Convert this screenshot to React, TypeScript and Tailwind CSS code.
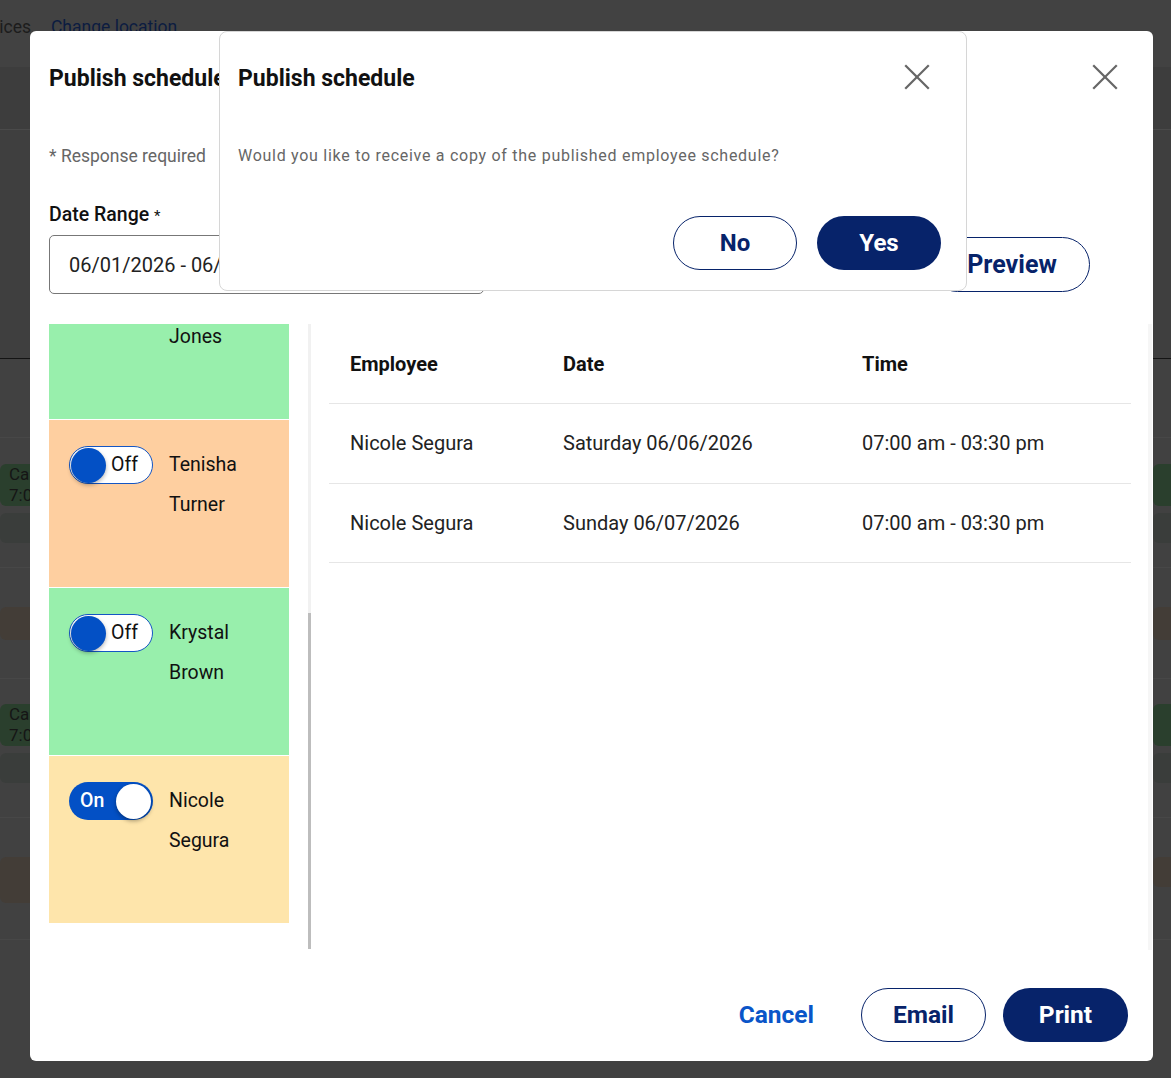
import React from 'react';

function CloseIcon() {
  return (
    <svg width="26" height="26" viewBox="0 0 26 26" fill="none" stroke="#666666" strokeWidth="2.2" strokeLinecap="square">
      <line x1="2" y1="2" x2="24" y2="24" />
      <line x1="24" y1="2" x2="2" y2="24" />
    </svg>
  );
}

function Toggle({ on }: { on: boolean }) {
  if (on) {
    return (
      <div className="flex h-[38px] w-[84px] shrink-0 items-center justify-between rounded-full bg-[#0350c5] pl-[11px] pr-[2px]">
        <span className="text-[19.5px] font-medium text-white">On</span>
        <span className="h-[35px] w-[35px] rounded-full bg-white shadow-[0_2px_4px_rgba(0,0,0,0.35)]" />
      </div>
    );
  }
  return (
    <div className="flex h-[38px] w-[84px] shrink-0 items-center rounded-full border-[1.5px] border-[#1456c4] bg-white pl-[1px]">
      <span className="h-[35px] w-[35px] rounded-full bg-[#0350c5] shadow-[0_2px_4px_rgba(0,0,0,0.3)]" />
      <span className="ml-[5px] text-[19.5px] text-[#111]">Off</span>
    </div>
  );
}

interface Person {
  first: string;
  last: string;
  on: boolean;
  color: string;
}

const people: Person[] = [
  { first: 'Marcus', last: 'Jones', on: false, color: 'bg-[#98efac]' },
  { first: 'Tenisha', last: 'Turner', on: false, color: 'bg-[#fecfa0]' },
  { first: 'Krystal', last: 'Brown', on: false, color: 'bg-[#98efac]' },
  { first: 'Nicole', last: 'Segura', on: true, color: 'bg-[#fee5ab]' },
];

const shifts = [
  { name: 'Nicole Segura', date: 'Saturday 06/06/2026', time: '07:00 am - 03:30 pm' },
  { name: 'Nicole Segura', date: 'Sunday 06/07/2026', time: '07:00 am - 03:30 pm' },
];

function BgCells({ label }: { label: boolean }) {
  return (
    <div className="flex flex-col gap-[7px]">
      <div className="flex h-[42px] w-[70px] flex-col justify-center rounded-[6px] bg-[#2a3f2d] pl-[9px] text-[17px] leading-[21px] text-[#151515]">
        {label && (
          <>
            <span>Ca</span>
            <span>7:0</span>
          </>
        )}
      </div>
      <div className="h-[30px] w-[70px] rounded-[6px] bg-[#3a3d3b]" />
    </div>
  );
}

function BackgroundPage() {
  return (
    <div className="flex flex-col bg-[#414141]">
      <div className="flex h-[67px] items-start gap-[20px] bg-[#424242] pt-[13px] text-[17.5px] leading-[28px]">
        <span className="-ml-[35px] text-[#1c1c1c]">Services</span>
        <span className="text-[#0c1c40]">Change location</span>
      </div>
      <div className="h-[63px] border-b border-[#4a4a4a] bg-[#3d3d3d]" />
      <div className="h-[229px] border-b border-[#141414] bg-[#3f3f3f]" />
      <div className="h-[79px] border-b border-[#474747]" />
      <div className="flex h-[130px] items-start justify-between border-b border-[#474747] pt-[26px]">
        <BgCells label />
        <div className="-mr-[52px]"><BgCells label={false} /></div>
      </div>
      <div className="flex h-[111px] items-start justify-between border-b border-[#474747] pt-[39px]">
        <div className="h-[33px] w-[70px] rounded-[6px] bg-[#433d37]" />
        <div className="-mr-[52px] h-[33px] w-[70px] rounded-[6px] bg-[#433d37]" />
      </div>
      <div className="flex h-[139px] items-start justify-between border-b border-[#474747] pt-[25px]">
        <BgCells label />
        <div className="-mr-[52px]"><BgCells label={false} /></div>
      </div>
      <div className="flex h-[122px] items-start justify-between border-b border-[#474747] pt-[39px]">
        <div className="h-[46px] w-[70px] rounded-[6px] bg-[#433d37]" />
        <div className="-mr-[52px] h-[30px] w-[70px] rounded-[6px] bg-[#433d37]" />
      </div>
      <div className="h-[138px]" />
    </div>
  );
}

export default function App() {
  return (
    <div className="relative h-[1078px] w-[1171px] overflow-hidden font-['Roboto',sans-serif]">
      <BackgroundPage />

      {/* main dialog */}
      <div className="absolute left-[30px] top-[31px] flex h-[1030px] w-[1123px] flex-col rounded-[6px] bg-white">
        <div className="flex items-start justify-between pl-[19px] pr-[35px] pt-[33px]">
          <h2 className="text-[23px] font-bold leading-[30px] text-[#111]">Publish schedule</h2>
          <div><CloseIcon /></div>
        </div>

        <p className="mt-[50px] pl-[19px] text-[17.5px] leading-[24px] text-[#666]">* Response required</p>

        <p className="mt-[35px] pl-[19px] text-[19.5px] font-medium leading-[24px] text-[#111]">
          Date Range <span className="text-[15px] font-normal">*</span>
        </p>

        <div className="mt-[7px] flex items-center justify-between pl-[19px] pr-[63px]">
          <div className="flex h-[59px] w-[435px] items-center rounded-[5px] border border-[#777] pl-[19px] text-[20px] text-[#222]">
            06/01/2026 - 06/07/2026
          </div>
          <button className="h-[55px] w-[160px] rounded-full border-[1.5px] border-[#07236a] pl-[4px] text-[25px] font-bold text-[#07236a]">
            Preview
          </button>
        </div>

        <div className="mt-[30px] flex h-[625px] pl-[19px] pr-[1px]">
          {/* employee list */}
          <div className="h-[625px] w-[240px] overflow-hidden">
            <div className="-mt-[72px] flex flex-col">
              {people.map((p) => (
                <div key={p.first} className={`flex h-[168px] shrink-0 gap-[16px] border-b border-white pl-[20px] pt-[25px] ${p.color}`}>
                  <div className="pt-[1px]"><Toggle on={p.on} /></div>
                  <div className="flex flex-col text-[19.5px] leading-[40px] text-[#111]">
                    <span>{p.first}</span>
                    <span>{p.last}</span>
                  </div>
                </div>
              ))}
            </div>
          </div>

          {/* left scrollbar */}
          <div className="ml-[19px] flex h-[625px] w-[3px] flex-col bg-[#f1f1f1]">
            <div className="mt-[289px] h-[336px] w-[3px] bg-[#bdbdbd]" />
          </div>

          {/* table */}
          <div className="ml-[18px] flex flex-1">
            <div className="w-[802px]">
              <div className="flex h-[80px] items-center border-b border-[#e6e6e6] text-[20px] font-bold text-[#111]">
                <div className="w-[234px] pl-[21px]">Employee</div>
                <div className="w-[299px]">Date</div>
                <div className="flex-1">Time</div>
              </div>
              {shifts.map((s) => (
                <div key={s.date} className="flex h-[79.5px] items-center border-b border-[#e6e6e6] text-[20px] text-[#222]">
                  <div className="w-[234px] pl-[21px]">{s.name}</div>
                  <div className="w-[299px]">{s.date}</div>
                  <div className="flex-1">{s.time}</div>
                </div>
              ))}
            </div>
            <div className="ml-[17px] h-[626px] w-[4px] bg-[#f6f6f6]" />
          </div>
        </div>

        <div className="mt-[39px] flex items-center justify-end pr-[25px]">
          <button className="mr-[47px] text-[24.5px] font-bold text-[#0a55c8]">Cancel</button>
          <button className="h-[54px] w-[125px] rounded-full border-[1.5px] border-[#07236a] text-[24.5px] font-bold text-[#07236a]">
            Email
          </button>
          <button className="ml-[17px] h-[54px] w-[125px] rounded-full bg-[#07236a] text-[24.5px] font-bold text-white">
            Print
          </button>
        </div>
      </div>

      {/* confirmation dialog */}
      <div className="absolute left-[219px] top-[31px] flex h-[260px] w-[748px] flex-col rounded-[8px] border border-[#d6d6d6] bg-white">
        <div className="flex items-start justify-between pl-[18px] pr-[36px] pt-[32px]">
          <h2 className="text-[23px] font-bold leading-[30px] text-[#111]">Publish schedule</h2>
          <div><CloseIcon /></div>
        </div>
        <p className="mt-[51px] pl-[18px] text-[16px] leading-[22px] tracking-[0.72px] text-[#666]">
          Would you like to receive a copy of the published employee schedule?
        </p>
        <div className="mt-auto flex justify-end gap-[20px] pb-[20px] pr-[25px]">
          <button className="h-[54px] w-[124px] rounded-full border-[1.5px] border-[#07236a] bg-white text-[24px] font-bold text-[#07236a]">
            No
          </button>
          <button className="h-[54px] w-[124px] rounded-full bg-[#07236a] text-[24px] font-bold text-white">
            Yes
          </button>
        </div>
      </div>
    </div>
  );
}
